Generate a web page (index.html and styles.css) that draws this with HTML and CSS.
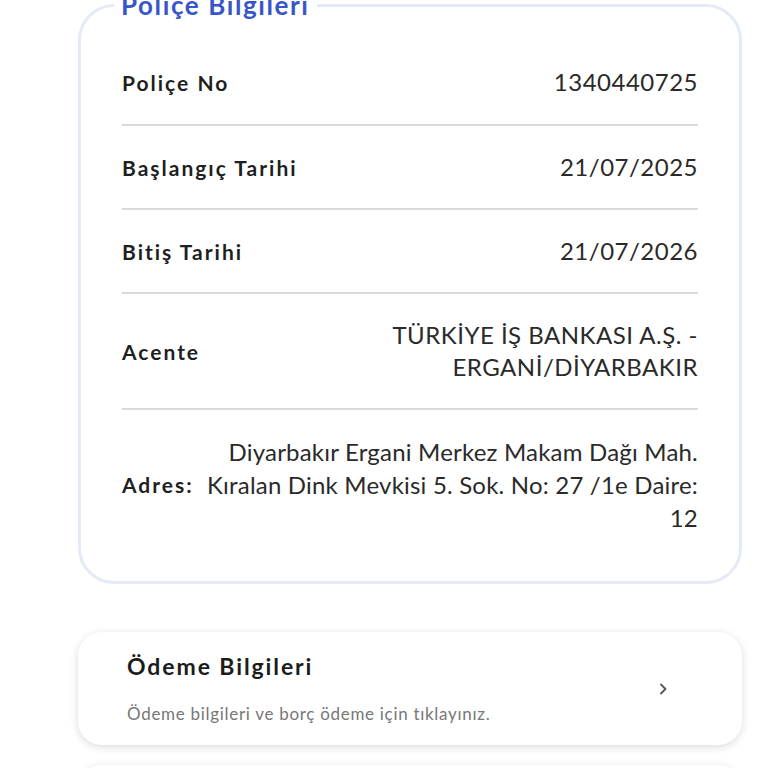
FILE: index.html
```html
<!DOCTYPE html>
<html lang="tr">
<head>
<meta charset="utf-8">
<link rel="stylesheet" href="styles.css">
</head>
<body>
<main class="page">
  <fieldset class="policy-card">
    <legend class="policy-title">Poliçe Bilgileri</legend>
    <div class="row">
      <span class="label">Poliçe No</span>
      <span class="value">1340440725</span>
    </div>
    <div class="row">
      <span class="label">Başlangıç Tarihi</span>
      <span class="value">21/07/2025</span>
    </div>
    <div class="row">
      <span class="label">Bitiş Tarihi</span>
      <span class="value">21/07/2026</span>
    </div>
    <div class="row">
      <span class="label">Acente</span>
      <span class="value">TÜRKİYE İŞ BANKASI A.Ş. - ERGANİ/DİYARBAKIR</span>
    </div>
    <div class="row row-address">
      <span class="label">Adres:</span>
      <span class="value">Diyarbakır Ergani Merkez Makam Dağı Mah. Kıralan Dink Mevkisi 5. Sok. No: 27 /1e Daire: 12</span>
    </div>
  </fieldset>

  <a class="link-card" href="#">
    <div class="link-text">
      <div class="link-title">Ödeme Bilgileri</div>
      <div class="link-sub">Ödeme bilgileri ve borç ödeme için tıklayınız.</div>
    </div>
    <svg class="chevron" width="14" height="14" viewBox="0 0 14 14" aria-hidden="true">
      <path d="M5 2.5 L9.5 7 L5 11.5" fill="none" stroke="#555" stroke-width="1.8" stroke-linecap="round" stroke-linejoin="round"/>
    </svg>
  </a>

  <div class="link-card next-card"></div>
</main>
</body>
</html>
```

FILE: styles.css
```css
html, body {
  margin: 0;
  padding: 0;
  background: #ffffff;
}

body {
  font-family: Lato, "Noto Sans", sans-serif;
  color: #262626;
  overflow: hidden;
  height: 768px;
}

.page {
  width: 664px;
  margin-left: 78px;
  display: flex;
  flex-direction: column;
}

.policy-card {
  margin: -9px 0 0 0;
  padding: 22px 41px 47px 41px;
  border: 3px solid #e5eaf7;
  border-radius: 36px;
  min-width: 0;
}

.policy-title {
  padding: 0 7px;
  margin-left: -8px;
  font-size: 26px;
  line-height: 28px;
  font-weight: 700;
  color: #3956c8;
  letter-spacing: 1.6px;
}

.row {
  display: flex;
  align-items: center;
  justify-content: space-between;
  gap: 8px;
  padding: 25px 0;
  border-bottom: 2px solid #dadada;
}

.row:first-of-type {
  padding-bottom: 26px;
}

.row-address {
  border-bottom: none;
  padding: 25px 0 0 0;
}

.label {
  flex: none;
  font-size: 21px;
  font-weight: 700;
  letter-spacing: 2px;
  color: #1f1f1f;
}

.value {
  font-size: 24px;
  line-height: 32px;
  letter-spacing: 0.5px;
  text-align: right;
  color: #2a2a2a;
}

.row-address .value {
  line-height: 33px;
  letter-spacing: 0.2px;
}

.link-card {
  display: flex;
  align-items: center;
  justify-content: space-between;
  margin-top: 48px;
  height: 113px;
  flex: none;
  box-sizing: border-box;
  padding: 0 72px 0 49px;
  border-radius: 24px;
  background: #ffffff;
  box-shadow: 0 2px 8px rgba(0, 0, 0, 0.14);
  text-decoration: none;
  color: inherit;
}

.link-text {
  display: flex;
  flex-direction: column;
  gap: 23px;
  align-self: flex-start;
  padding-top: 20px;
}

.link-title {
  font-size: 23px;
  line-height: 28px;
  font-weight: 700;
  letter-spacing: 1.9px;
  color: #1c1c1c;
}

.link-sub {
  font-size: 17px;
  line-height: 22px;
  letter-spacing: 0.7px;
  color: #777777;
}

.chevron {
  flex: none;
}

.next-card {
  margin-top: 20px;
}
```
